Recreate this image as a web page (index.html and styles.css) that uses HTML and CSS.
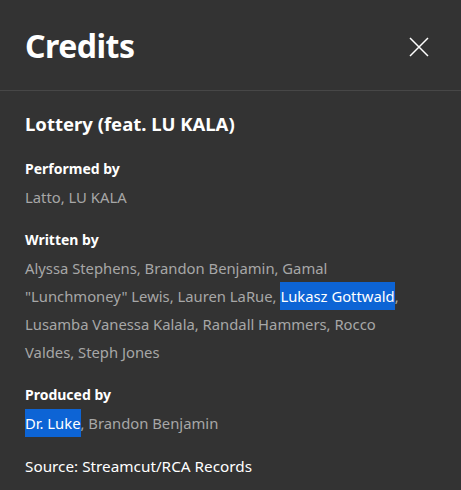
FILE: index.html
```html
<!DOCTYPE html>
<html>
<head>
<meta charset="utf-8">
<link rel="stylesheet" href="styles.css">
</head>
<body>
<div class="dialog">
  <header class="head">
    <h1 class="title">Credits</h1>
    <button class="close" aria-label="Close">
      <svg width="20" height="20" viewBox="0 0 20 20"><path d="M1 1L19 19M19 1L1 19" stroke="#ffffff" stroke-width="1.5" fill="none"/></svg>
    </button>
  </header>
  <main class="body">
    <h2 class="song">Lottery (feat. LU KALA)</h2>
    <section class="group">
      <h3 class="label">Performed by</h3>
      <p class="names">Latto, LU KALA</p>
    </section>
    <section class="group">
      <h3 class="label">Written by</h3>
      <p class="names">Alyssa Stephens, Brandon Benjamin, Gamal "Lunchmoney" Lewis, Lauren LaRue, <span class="hl">Lukasz Gottwald</span>, Lusamba Vanessa Kalala, Randall Hammers, Rocco Valdes, Steph Jones</p>
    </section>
    <section class="group">
      <h3 class="label">Produced by</h3>
      <p class="names"><span class="hl">Dr. Luke</span>, Brandon Benjamin</p>
    </section>
    <p class="source">Source: Streamcut/RCA Records</p>
  </main>
</div>
</body>
</html>
```
FILE: styles.css
```css
html, body {
  margin: 0;
  padding: 0;
  background: #333333;
}
body {
  font-family: "Noto Sans", "Liberation Sans", sans-serif;
  color: #ffffff;
  width: 461px;
  height: 490px;
  overflow: hidden;
}
.head {
  display: flex;
  align-items: center;
  justify-content: space-between;
  height: 90px;
  padding: 0 32px 0 25px;
  border-bottom: 1px solid #474747;
}
.title {
  margin: 0;
  font-size: 32px;
  font-weight: 700;
  letter-spacing: -0.5px;
}
.close {
  background: none;
  border: 0;
  padding: 0;
  margin-top: 4px;
  width: 20px;
  height: 20px;
  display: flex;
}
.body {
  padding: 21px 41px 0 25px;
}
.song {
  margin: 0 0 23px;
  font-size: 18.5px;
  line-height: 24px;
  font-weight: 700;
}
.group {
  margin-bottom: 19px;
}
.label {
  margin: 0 0 4px;
  font-size: 14px;
  line-height: 20px;
  font-weight: 700;
}
.names {
  margin: 0;
  font-size: 14.8px;
  line-height: 28px;
  color: #a7a7a7;
}
.hl {
  background: #0d64d5;
  color: #ffffff;
  padding: 4px 0;
}
.source {
  margin: 0;
  font-size: 15.3px;
  line-height: 20px;
  color: #ffffff;
}
```
